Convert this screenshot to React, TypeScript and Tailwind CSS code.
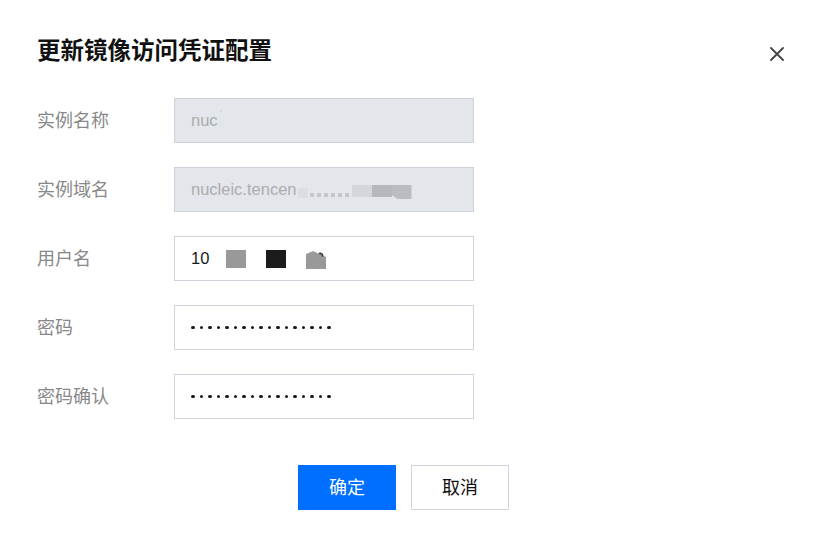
import React from 'react';

const FONT = '[font-family:"Liberation_Sans","Noto_Sans_CJK_SC",sans-serif]';

function Dots() {
  return (
    <div className="flex items-center gap-[5px]">
      {Array.from({ length: 17 }).map((_, i) => (
        <span key={i} className="block w-[3.5px] h-[3.5px] rounded-full bg-[#1a1a1a]" />
      ))}
    </div>
  );
}

function Row({ label, children, disabled }: { label: string; children: React.ReactNode; disabled?: boolean }) {
  return (
    <div className="flex items-center">
      <div className="w-[137px] text-[18px] leading-[24px] text-[#888888]">{label}</div>
      <div
        className={`w-[300px] h-[45px] flex items-center pl-[16px] border ${
          disabled ? 'bg-[#e3e6eb] border-[#cdd2da] text-[#adadad]' : 'bg-white border-[#cfd4dc] text-[#1a1a1a]'
        } text-[16.5px]`}
      >
        {children}
      </div>
    </div>
  );
}

export default function App() {
  return (
    <div className={`w-[822px] h-[540px] bg-white ${FONT}`}>
      <div className="flex items-center justify-between pt-[36px] pl-[37px] pr-[38px] h-[67px]">
        <h1 className="text-[23.5px] leading-[31px] font-bold text-[#111111]">更新镜像访问凭证配置</h1>
        <svg width="14" height="14" viewBox="0 0 14 14" className="mt-[4px]">
          <path d="M1 1L13 13M13 1L1 13" stroke="#444" strokeWidth="1.8" strokeLinecap="round" />
        </svg>
      </div>

      <div className="flex flex-col gap-[24px] pl-[37px] mt-[31px]">
        <Row label="实例名称" disabled>
          <span>nuc</span>
          <span className="ml-[2px] -mt-[10px] text-[10px] text-[#c8c8c8]">´</span>
        </Row>
        <Row label="实例域名" disabled>
          <span>nucleic.tencen</span>
          <span className="ml-[1px] w-[10px] h-[10px] mt-[6px] bg-[#dadde2]" />
          <span className="ml-[2px] w-[66px] h-[4px] mt-[10px] bg-[repeating-linear-gradient(90deg,#c4c7cc_0_4px,transparent_4px_7px)]" />
          <span className="-ml-[24px] w-[20px] h-[12px] mt-[2px] bg-[#d3d6db]" />
          <span className="w-[20px] h-[12px] mt-[2px] bg-[#b4b7bc]" />
          <span className="w-[20px] h-[14px] mt-[5px] bg-[#b9bcc1] [clip-path:polygon(0_0,100%_0,100%_100%,30%_100%,0_70%)]" />
        </Row>
        <Row label="用户名">
          <span className="whitespace-nowrap">10</span>
          <span className="ml-[17px] w-[20px] h-[18px] bg-[#999999]" />
          <span className="ml-[20px] w-[20px] h-[18px] bg-[#1c1c1c]" />
          <svg width="22" height="18" viewBox="0 0 22 18" className="ml-[20px] mt-[2px]">
            <path d="M0 3L7 0L20 6V18H0Z" fill="#999999" />
            <path d="M13 2.5C15.5 2 17 3.5 16.5 5.5" stroke="#333" strokeWidth="1.6" fill="none" />
          </svg>
        </Row>
        <Row label="密码">
          <Dots />
        </Row>
        <Row label="密码确认">
          <Dots />
        </Row>
      </div>

      <div className="flex gap-[15px] pl-[298px] mt-[46px]">
        <button className="w-[98px] h-[45px] bg-[#006eff] text-white text-[18px] leading-none">确定</button>
        <button className="w-[98px] h-[45px] bg-white border border-[#cfd4dc] text-[#111111] text-[18px] leading-none">
          取消
        </button>
      </div>
    </div>
  );
}
